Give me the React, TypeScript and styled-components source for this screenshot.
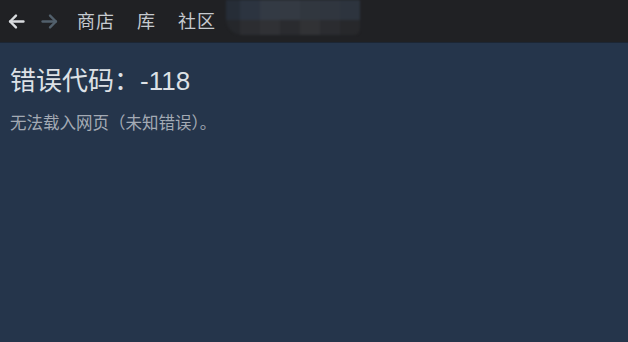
import React from "react";
import styled, { createGlobalStyle } from "styled-components";

const Global = createGlobalStyle`
  html, body { margin: 0; padding: 0; background: #25354b; }
  body { font-family: "Liberation Sans", "Noto Sans CJK SC", sans-serif; }
`;

const Page = styled.div`
  width: 628px;
  height: 342px;
  display: flex;
  flex-direction: column;
  background: #25354b;
  overflow: hidden;
`;

const TopBar = styled.div`
  height: 42px;
  flex: none;
  background: #202124;
  border-bottom: 1px solid #1c2634;
  display: flex;
  align-items: center;
  padding-left: 8px;
  position: relative;
`;

const NavButton = styled.div<{ $dim?: boolean }>`
  width: 17px;
  height: 17px;
  margin-right: 16px;
  color: ${(p) => (p.$dim ? "#52606c" : "#d9dcdf")};
  display: flex;
  align-items: center;
`;

const NavLink = styled.div`
  font-family: "Noto Sans CJK SC", sans-serif;
  font-size: 18px;
  color: #c6cacf;
  margin-left: 3px;
  margin-right: 19px;
  letter-spacing: 1px;
  line-height: 1;
  padding-bottom: 2px;
`;

const Blur = styled.div`
  position: absolute;
  left: 226px;
  top: 0;
  width: 134px;
  height: 35px;
  display: grid;
  grid-template-columns: 14px repeat(6, 20px);
  grid-template-rows: 20px 15px;
  border-radius: 0 0 6px 16px;
  overflow: hidden;
  filter: blur(1.2px);
`;

const Cell = styled.div<{ $c: string }>`
  background: ${(p) => p.$c};
`;

const Content = styled.div`
  padding: 20px 10px;
  display: flex;
  flex-direction: column;
`;

const Title = styled.div`
  font-family: "Liberation Sans", "Noto Sans CJK SC", sans-serif;
  font-size: 26px;
  color: #dde1e6;
  line-height: 36px;
`;

const Message = styled.div`
  font-family: "Noto Sans CJK SC", sans-serif;
  font-size: 16.5px;
  color: #a3aab4;
  margin-top: 12px;
  line-height: 22px;
`;

const Arrow = ({ dir }: { dir: "l" | "r" }) => (
  <svg width="17" height="17" viewBox="0 0 16 16" fill="none" stroke="currentColor" strokeWidth="2.3" strokeLinecap="round" strokeLinejoin="round">
    {dir === "l" ? (
      <>
        <path d="M14.5 8H2" />
        <path d="M7.5 2.5L2 8L7.5 13.5" />
      </>
    ) : (
      <>
        <path d="M1.5 8H14" />
        <path d="M8.5 2.5L14 8L8.5 13.5" />
      </>
    )}
  </svg>
);

const cells = [
  "#262d37", "#2c3440", "#333a44", "#343a43", "#31373f", "#30363f", "#2d343e",
  "#25272b", "#2c2d31", "#303135", "#2a2b2f", "#313235", "#2b2c30", "#27282b",
];

export default function App() {
  return (
    <Page>
      <Global />
      <TopBar>
        <NavButton>
          <Arrow dir="l" />
        </NavButton>
        <NavButton $dim>
          <Arrow dir="r" />
        </NavButton>
        <NavLink>商店</NavLink>
        <NavLink>库</NavLink>
        <NavLink>社区</NavLink>
        <Blur>
          {cells.map((c, i) => (
            <Cell key={i} $c={c} />
          ))}
        </Blur>
      </TopBar>
      <Content>
        <Title>错误代码：-118</Title>
        <Message>无法载入网页（未知错误）。</Message>
      </Content>
    </Page>
  );
}
